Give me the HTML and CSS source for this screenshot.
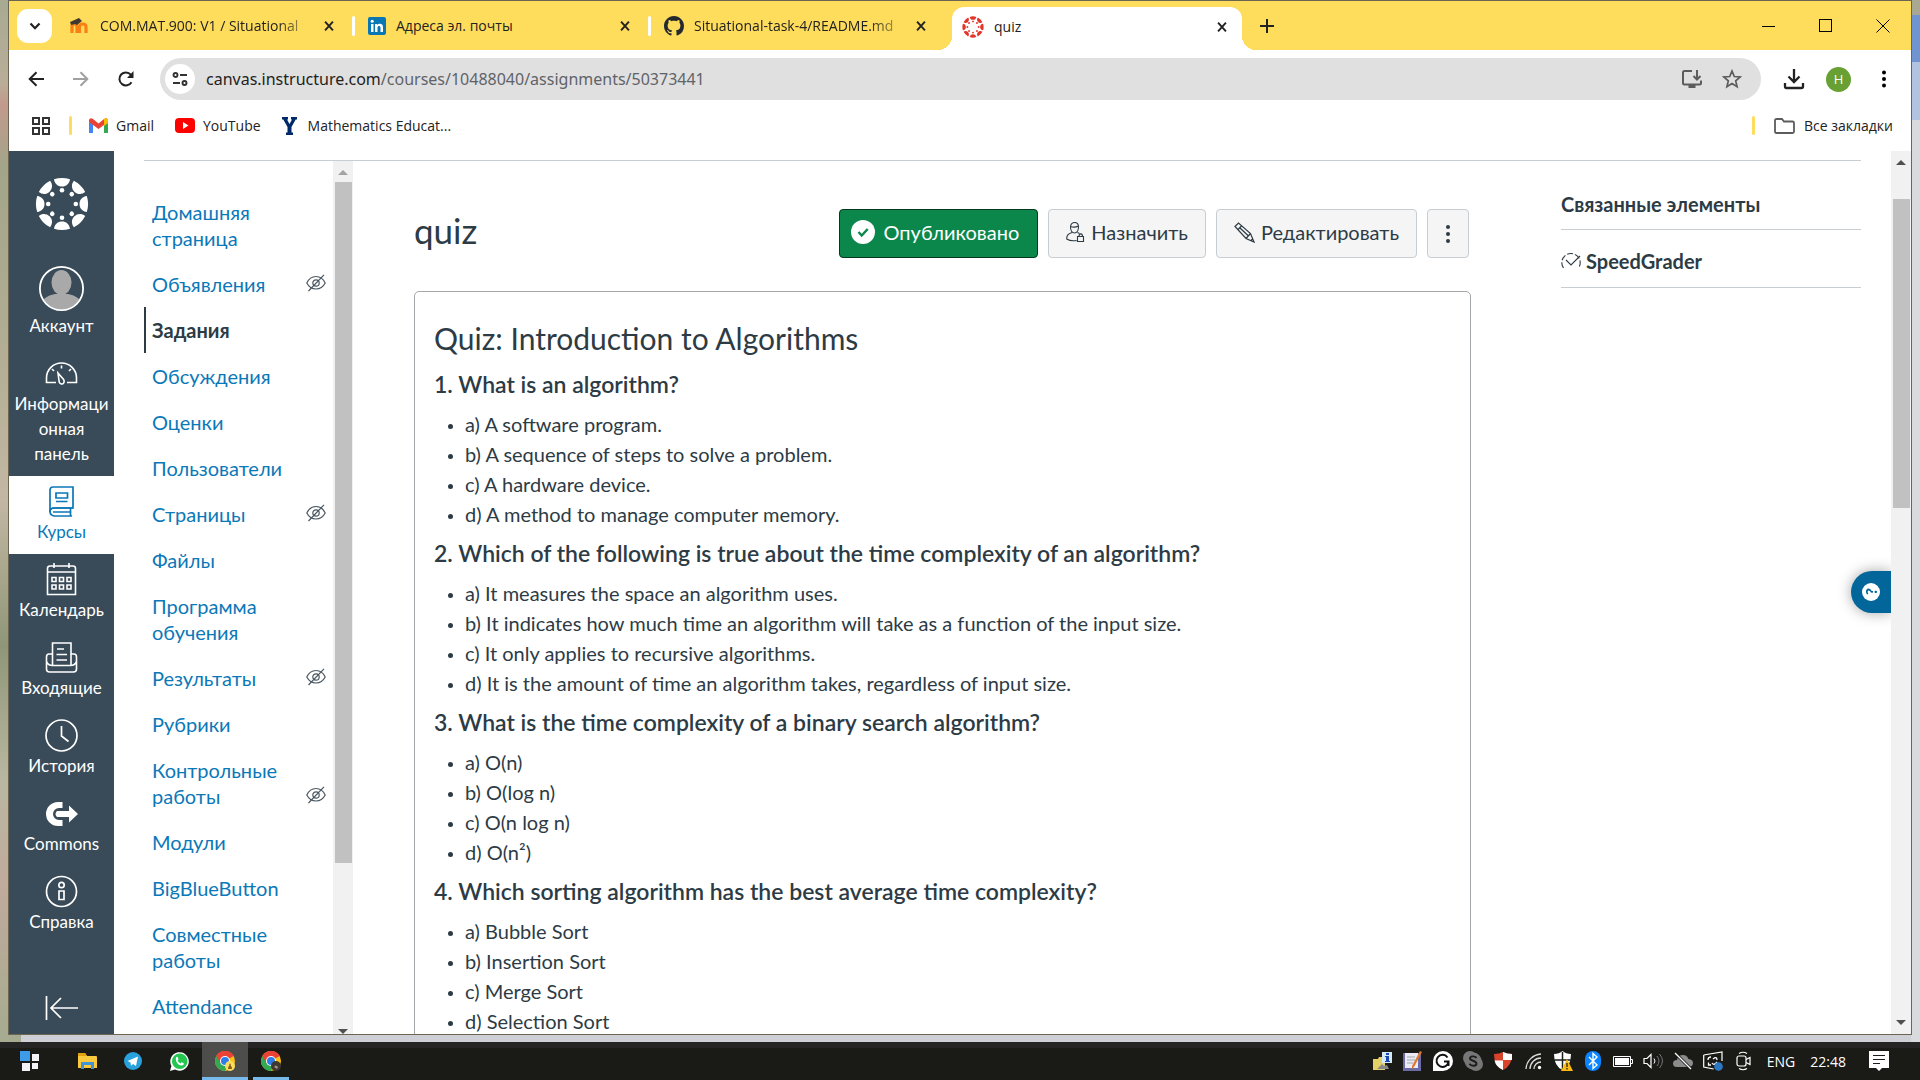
FILE: index.html
```html
<!DOCTYPE html>
<html lang="ru">
<head>
<meta charset="utf-8">
<title>quiz</title>
<link rel="stylesheet" href="styles.css">
</head>
<body>
<svg class="defs" aria-hidden="true">
  <symbol id="x" viewBox="0 0 16 16"><path d="M3.500 3l9 10M12.500 3l-9 10" fill="none" stroke="#222" stroke-width="2.200"/></symbol>
  <symbol id="canvas" viewBox="0 0 54 54">
    <g id="ray"><path d="M19 2.200a26 26 0 0 1 16 0c-.6 4.600-3.800 7.300-8 7.300s-7.400-2.700-8-7.300z"/><circle cx="27" cy="13.200" r="2.300"/></g>
    <use href="#ray" transform="rotate(45 27 27)"/><use href="#ray" transform="rotate(90 27 27)"/><use href="#ray" transform="rotate(135 27 27)"/><use href="#ray" transform="rotate(180 27 27)"/><use href="#ray" transform="rotate(225 27 27)"/><use href="#ray" transform="rotate(270 27 27)"/><use href="#ray" transform="rotate(315 27 27)"/>
  </symbol>
  <symbol id="eye" viewBox="0 0 20 18"><g fill="none" stroke="#4a5862" stroke-width="1.200"><path d="M.8 9C3 4.300 6.500 2.500 10 2.500S17 4.300 19.200 9C17 13.200 13.500 15 10 15S3 13.200.8 9z"/><circle cx="10" cy="9" r="3.200"/><path d="M2.500 17L18 .8"/></g></symbol>
  <symbol id="chrome" viewBox="0 0 20 20"><circle cx="10" cy="10" r="10" fill="#fbc116"/><path d="M10 10L1.340 5A10 10 0 0 1 18.660 5z" fill="#ea4335"/><path d="M10 10L1.340 5A10 10 0 0 0 10 20L14 12z" fill="#34a853"/><path d="M10 5h8.660A10 10 0 0 0 1.340 5l4.330 7.500z" fill="#ea4335"/><circle cx="10" cy="10" r="5" fill="#fff"/><circle cx="10" cy="10" r="4" fill="#2b7de9"/></symbol>
</svg>

<div class="desktop">
<div class="window">
  <header class="tabstrip">
    <button class="tab-search" aria-label="Поиск вкладок"><svg width="12" height="12" viewBox="0 0 12 12"><path d="M1.500 3.500L6 8.200l4.500-4.700" fill="none" stroke="#222" stroke-width="2.200"/></svg></button>
    <div class="tab">
      <svg width="21" height="20" viewBox="0 0 21 20"><path d="M3 17V9M3 17V11c0-4 5-4 5 0v6M10.500 17V11c0-4 6.500-4 6.500 0v6M10 11v6" fill="none" stroke="#f98012" stroke-width="3.200"/><path d="M1 6l9-4 3 3-5 4-2-1-4 1z" fill="#42382f"/></svg>
      <span class="tab-title faded">COM.MAT.900: V1 / Situational</span><button class="tab-close" aria-label="Закрыть"><svg width="14" height="14"><use href="#x"/></svg></button>
    </div>
    <div class="tab ruled">
      <svg width="18" height="18" viewBox="0 0 18 18"><rect width="18" height="18" rx="2" fill="#0a77b5"/><path d="M3 7h2.500v8H3zM7 7h2.300v1.200C10.600 6 15 6.200 15 10v5h-2.500v-4.500c0-2.200-3-2-3 0V15H7z" fill="#fff"/><circle cx="4.200" cy="4.300" r="1.500" fill="#fff"/></svg>
      <span class="tab-title">Адреса эл. почты</span><button class="tab-close" aria-label="Закрыть"><svg width="14" height="14"><use href="#x"/></svg></button>
    </div>
    <div class="tab ruled">
      <svg width="20" height="20" viewBox="0 0 16 16"><path fill="#24292f" d="M8 0C3.580 0 0 3.580 0 8c0 3.540 2.290 6.530 5.470 7.590.4.070.55-.17.55-.38 0-.19-.01-.82-.01-1.490-2.010.37-2.530-.49-2.690-.94-.09-.23-.48-.94-.82-1.130-.28-.15-.68-.52-.01-.53.63-.01 1.080.58 1.230.82.72 1.210 1.870.87 2.330.66.070-.52.28-.87.51-1.070-1.780-.2-3.640-.89-3.640-3.950 0-.87.31-1.590.82-2.150-.08-.2-.36-1.020.08-2.120 0 0 .67-.21 2.200.82.640-.18 1.320-.27 2-.27s1.360.09 2 .27c1.530-1.040 2.200-.82 2.200-.82.440 1.100.160 1.920.080 2.120.510.560.820 1.270.820 2.150 0 3.070-1.870 3.750-3.650 3.950.290.250.540.730.540 1.480 0 1.070-.010 1.930-.010 2.200 0 .210.150.460.550.380A8 8 0 0 0 16 8c0-4.420-3.580-8-8-8z"/></svg>
      <span class="tab-title faded">Situational-task-4/README.md</span><button class="tab-close" aria-label="Закрыть"><svg width="14" height="14"><use href="#x"/></svg></button>
    </div>
    <div class="tab active">
      <svg width="22" height="22" fill="#e4352b"><use href="#canvas"/></svg>
      <span class="tab-title">quiz</span><button class="tab-close" aria-label="Закрыть"><svg width="14" height="14"><use href="#x"/></svg></button>
    </div>
    <button class="new-tab" aria-label="Новая вкладка"><svg width="14" height="14"><path d="M7 0v14M0 7h14" stroke="#222" stroke-width="2"/></svg></button>
    <div class="win-controls">
      <button aria-label="Свернуть"><svg width="14" height="14"><path d="M0 7.500h13" stroke="#000"/></svg></button>
      <button aria-label="Развернуть"><svg width="14" height="14"><rect x=".5" y=".5" width="12" height="12" fill="none" stroke="#000"/></svg></button>
      <button aria-label="Закрыть окно"><svg width="14" height="14"><path d="M.5.5l13 13M13.500.5l-13 13" stroke="#000"/></svg></button>
    </div>
  </header>

  <div class="toolbar">
    <button aria-label="Назад"><svg width="16" height="16"><path d="M16 8H2M8.500 1.200L1.700 8l6.800 6.800" fill="none" stroke="#222" stroke-width="2"/></svg></button>
    <button aria-label="Вперёд"><svg width="16" height="16"><path d="M0 8h14M7.500 1.200L14.300 8l-6.800 6.800" fill="none" stroke="#a0a0a0" stroke-width="2"/></svg></button>
    <button aria-label="Обновить"><svg width="16" height="16"><path d="M13.500 11.200A6.500 6.500 0 1 1 12.800 3.600L14.500 5.500" fill="none" stroke="#222" stroke-width="2"/><path d="M15.500 0v7H9z" fill="#222"/></svg></button>
    <div class="omnibox">
      <button class="site-info" aria-label="Сведения о сайте"><svg width="16" height="16" viewBox="0 0 16 16"><g fill="none" stroke="#333" stroke-width="1.900"><circle cx="3.500" cy="4" r="2"/><path d="M8 4h7M1 12h7"/><circle cx="12.500" cy="12" r="2"/></g></svg></button>
      <p class="url">canvas.instructure.com<span>/courses/10488040/assignments/50373441</span></p>
      <button aria-label="Установить"><svg width="22" height="20" viewBox="0 0 22 20"><path d="M11 2H3.500Q2 2 2 3.500V14q0 1.500 1.500 1.500h15Q20 15.500 20 14v-2.500M16 1v9M12.500 7l3.500 3.500L19.500 7" fill="none" stroke="#5c5c5c" stroke-width="2"/><path d="M7.500 15h7v4h-7z" fill="#5c5c5c"/></svg></button>
      <button aria-label="В закладки"><svg width="20" height="20" viewBox="0 0 20 20"><path d="M10 2l2.300 5.500 5.900.5-4.500 3.900 1.400 5.800L10 14.600l-5.100 3.100 1.400-5.800L1.800 8l5.900-.5z" fill="none" stroke="#5c5c5c" stroke-width="1.700"/></svg></button>
    </div>
    <button aria-label="Загрузки"><svg width="22" height="22" viewBox="0 0 22 22"><path d="M11 1v12M5.500 8.500L11 14l5.500-5.500M2 15v3.500Q2 20 3.500 20h15q1.500 0 1.500-1.500V15" fill="none" stroke="#222" stroke-width="2.300"/></svg></button>
    <button class="profile" aria-label="Профиль">H</button>
    <button aria-label="Меню"><svg width="6" height="18"><circle cx="3" cy="2.500" r="2"/><circle cx="3" cy="9" r="2"/><circle cx="3" cy="15.500" r="2"/></svg></button>
  </div>

  <nav class="bookmarks" aria-label="Закладки">
    <button aria-label="Приложения"><svg width="18" height="18"><g fill="none" stroke="#333" stroke-width="2"><path d="M1 1h6v6H1zM11 1h6v6h-6zM1 11h6v6H1zM11 11h6v6h-6z"/></g></svg></button>
    <i class="bar"></i>
    <a href="#"><svg width="19" height="15" viewBox="0 0 19 15"><path d="M0 2v13h4V5z" fill="#4285f4"/><path d="M19 2v13h-4V5z" fill="#34a853"/><path d="M0 2q1-3 4-1l5.500 4.500L15 1q3-2 4 1v2l-9.500 7L0 4z" fill="#ea4335"/><path d="M15 1q3-2 4 1v3l-4 3z" fill="#fbbc04"/></svg>Gmail</a>
    <a href="#"><svg width="20" height="15" viewBox="0 0 20 15"><rect width="20" height="15" rx="4" fill="#f00"/><path d="M8 4v7l5.500-3.500z" fill="#fff"/></svg>YouTube</a>
    <a href="#" class="yale"><svg width="15" height="18" viewBox="0 0 15 18"><path d="M0 0h6v2.500H5L7.500 7 10 2.500H9V0h6v2.500h-1.300L9.500 10v5.500H11V18H4v-2.500h1.500V10L1.300 2.500H0z" fill="#00296b"/></svg>Mathematics Educat...</a>
    <i class="bar end"></i>
    <a href="#" class="all"><svg width="21" height="16" viewBox="0 0 21 16"><path d="M1 2.500Q1 1 2.500 1H8l2 2.500h8.500q1.500 0 1.500 1.500v8.500q0 1.500-1.500 1.500h-16Q1 15 1 13.500z" fill="none" stroke="#5c5c5c" stroke-width="1.800"/></svg>Все закладки</a>
  </nav>

  <div class="page">
    <nav class="global-nav" aria-label="Глобальная навигация">
      <a href="#" class="logo" aria-label="Canvas"><svg width="54" height="54" fill="#fff"><use href="#canvas"/></svg></a>
      <a href="#" class="account"><svg width="45" height="45" viewBox="0 0 45 45"><defs><clipPath id="av"><circle cx="22.500" cy="22.500" r="21"/></clipPath></defs><g clip-path="url(#av)" fill="#a9a9a9"><ellipse cx="22.500" cy="16.500" rx="10" ry="12.500"/><path d="M0 45c1-10 6-15 16-17h13c10 2 15 7 16 17z"/></g><circle cx="22.500" cy="22.500" r="21.600" fill="none" stroke="#fff" stroke-width="1.800"/></svg>Аккаунт</a>
      <a href="#"><svg width="33" height="33" viewBox="0 0 33 33"><g fill="none" stroke="#fff" stroke-width="1.600"><path d="M11 25.500H1.500V21a15 15 0 0 1 30 0v4.500H22"/><path d="M13 16l5.600 6.500c2.200 4-2.800 6.500-4.400 2.500z"/><path d="M16.500 8.500v3M7 12l2 2M26 12l-2 2"/></g></svg>Информаци<br>онная<br>панель</a>
      <a href="#" class="current"><svg width="33" height="33" viewBox="0 0 33 33"><g fill="none" stroke="#0b78b8" stroke-width="1.700"><path d="M8 2h20v21H9q-4 0-4 4V5q0-3 3-3z"/><path d="M28 23H9q-4 0-4 3.500T9 31h18M25.500 23v8M8 27h17"/><path d="M11 8h11.500v5H11zM11 16.500h11.500"/></g></svg>Курсы</a>
      <a href="#"><svg width="33" height="33" viewBox="0 0 33 33"><g fill="none" stroke="#fff" stroke-width="1.600"><path d="M5 3h23q2.500 0 2.500 2.500V31.500h-28V5.500Q2.500 3 5 3zM2.500 9h28M9 0v5M24 0v5"/><path d="M7 14.500h4v4H7zM14.500 14.500h4v4h-4zM22 14.500h4v4h-4zM7 22h4v4H7zM14.500 22h4v4h-4zM22 22h4v4h-4z"/></g></svg>Календарь</a>
      <a href="#"><svg width="33" height="33" viewBox="0 0 33 33"><g fill="none" stroke="#fff" stroke-width="1.600"><path d="M7.500 24V2h18.500v22"/><path d="M7.500 13H4q-2.500 0-2.500 3v12q0 3 3 3h24q3 0 3-3V16q0-3-2.500-3h-3M1.500 20.500q1.500 4 6 4h18q4.500 0 6-4M12 8h7M11.500 13.500H22M11.500 19H22"/></g></svg>Входящие</a>
      <a href="#"><svg width="33" height="33" viewBox="0 0 33 33"><g fill="none" stroke="#fff" stroke-width="1.700"><circle cx="16.500" cy="16.500" r="15.500"/><path d="M16.500 7v10l7 5.500"/></g></svg>История</a>
      <a href="#"><svg width="33" height="33" viewBox="0 0 33 33"><path d="M17.500 5H13a12 12 0 0 0 0 24h4.500v-6H14a6 6 0 0 1 0-12h3.500z" fill="#fff"/><path d="M12 14h12V8.500l9 8.500-9 8.500V20H12q-3-3 0-6z" fill="#fff"/></svg>Commons</a>
      <a href="#"><svg width="33" height="33" viewBox="0 0 33 33"><g fill="none" stroke="#fff" stroke-width="1.700"><circle cx="16.500" cy="16.500" r="15"/><circle cx="16.500" cy="10" r="2.700"/><path d="M14 16h5v8.500h-5z"/></g></svg>Справка</a>
      <button class="collapse" aria-label="Свернуть навигацию"><svg width="33" height="24"><path d="M1.500 0v24M33 12H6M16 2L6 12l10 10" fill="none" stroke="#fff" stroke-width="1.700"/></svg></button>
    </nav>

    <div class="content">
      <nav class="course-nav" aria-label="Курс">
        <ul>
          <li><a href="#">Домашняя страница</a></li>
          <li><a href="#">Объявления</a><svg width="20" height="18"><use href="#eye"/></svg></li>
          <li class="on"><a href="#">Задания</a></li>
          <li><a href="#">Обсуждения</a></li>
          <li><a href="#">Оценки</a></li>
          <li><a href="#">Пользователи</a></li>
          <li><a href="#">Страницы</a><svg width="20" height="18"><use href="#eye"/></svg></li>
          <li><a href="#">Файлы</a></li>
          <li><a href="#">Программа обучения</a></li>
          <li><a href="#">Результаты</a><svg width="20" height="18"><use href="#eye"/></svg></li>
          <li><a href="#">Рубрики</a></li>
          <li><a href="#">Контрольные работы</a><svg width="20" height="18"><use href="#eye"/></svg></li>
          <li><a href="#">Модули</a></li>
          <li><a href="#">BigBlueButton</a></li>
          <li><a href="#">Совместные работы</a></li>
          <li><a href="#">Attendance</a></li>
        </ul>
        <div class="scroll inner"><i class="arrow up dim"></i><i class="thumb"></i><i class="arrow down"></i></div>
      </nav>

      <main>
        <div class="title-row">
          <h1>quiz</h1>
          <button class="btn published"><svg width="24" height="24"><circle cx="12" cy="12" r="12" fill="#fff"/><path d="M7.500 12l3.200 3.500 6-6.500" fill="none" stroke="#0b874b" stroke-width="2.400"/></svg>Опубликовано</button>
          <button class="btn assign"><svg width="19" height="20" viewBox="0 0 19 20"><g fill="none" stroke="#2d3b45" stroke-width="1.100"><path d="M4.500 5c0-6 8-6 8 0 0 3-1.500 6-4 6s-4-3-4-6zM4.500 4.500q4 1.500 8-.5M6 10.500C2 12 .7 13 .7 17q4 2.500 10 1.500M11.500 10.500l2 1"/><path d="M11.500 14.500h6v5h-6zM13 14.500c0-3.500 3.500-3.500 3.500 0"/></g></svg>Назначить</button>
          <button class="btn edit"><svg width="21" height="21" viewBox="0 0 21 21"><g fill="none" stroke="#2d3b45" stroke-width="1.200"><path d="M1 4.500L4.500 1l12 10.500L20 20l-8-3.500zM4 7.500L7.500 4M12 16.500l4.500-5M6 6l8.500 8M16.500 19l2.500-2.500"/></g></svg>Редактировать</button>
          <button class="btn more" aria-label="Ещё"><svg width="4" height="20" fill="#2d3b45"><circle cx="2" cy="3" r="2"/><circle cx="2" cy="10" r="2"/><circle cx="2" cy="17" r="2"/></svg></button>
        </div>
        <article>
          <h2>Quiz: Introduction to Algorithms</h2>
          <h3>1. What is an algorithm?</h3>
          <ul><li>a) A software program.</li><li>b) A sequence of steps to solve a problem.</li><li>c) A hardware device.</li><li>d) A method to manage computer memory.</li></ul>
          <h3>2. Which of the following is true about the time complexity of an algorithm?</h3>
          <ul><li>a) It measures the space an algorithm uses.</li><li>b) It indicates how much time an algorithm will take as a function of the input size.</li><li>c) It only applies to recursive algorithms.</li><li>d) It is the amount of time an algorithm takes, regardless of input size.</li></ul>
          <h3>3. What is the time complexity of a binary search algorithm?</h3>
          <ul><li>a) O(n)</li><li>b) O(log n)</li><li>c) O(n log n)</li><li>d) O(n²)</li></ul>
          <h3>4. Which sorting algorithm has the best average time complexity?</h3>
          <ul><li>a) Bubble Sort</li><li>b) Insertion Sort</li><li>c) Merge Sort</li><li>d) Selection Sort</li></ul>
        </article>
      </main>

      <aside>
        <h2>Связанные элементы</h2>
        <a href="#"><svg width="20" height="17" viewBox="0 0 20 17"><g fill="none" stroke="#2d3b45" stroke-width="1.100"><path d="M2.500 16A9.200 9.200 0 1 1 17.500 16" stroke-dasharray="6 2"/><path d="M5 8l5 5 9-9"/></g></svg>SpeedGrader</a>
      </aside>
    </div>
    <button class="help-tab" aria-label="Помощь"><span>?</span></button>
    <div class="scroll outer"><i class="arrow up"></i><i class="thumb"></i><i class="arrow down"></i></div>
  </div>
</div>
</div>

<footer class="taskbar">
  <button class="start" aria-label="Пуск"><svg width="20" height="20"><path d="M0 0h10v10H0z" fill="#3f9be8"/><path d="M12 3h7v7h-7zM2 12h8v8H2zM12 12h6v6h-6z" fill="#f2f2f7"/></svg></button>
  <button aria-label="Проводник"><svg width="19" height="17"><path d="M0 1q0-1 1-1h6l2 3h9q1 0 1 1v11H0z" fill="#fbc93e"/><path d="M0 1q0-1 1-1h6l2 3H0z" fill="#e2a10e"/><path d="M3 16V9h13v7h-3v-4H6v4z" fill="#3f94d8"/></svg></button>
  <button aria-label="Telegram"><svg width="18" height="18"><circle cx="9" cy="9" r="9" fill="#29a1dc"/><path d="M3.500 9L14 4.500l-2 9.500-3-2-2 1.800-.5-3.300z" fill="#fff"/></svg></button>
  <button aria-label="WhatsApp"><svg width="19" height="19"><path d="M0 19l1.400-5A9.300 9.300 0 1 1 5 17.600z" fill="#fff"/><circle cx="9.700" cy="9.300" r="7.800" fill="#25c650"/><path d="M6 5.500q1.500-1.500 2 .5l.5 1.500-1 1q1 2 3 3l1-1.200 2.300 1q.2 2.200-2.300 2.200C8 13.500 5 9 6 5.500z" fill="#fff"/></svg></button>
  <button class="task focus" aria-label="Chrome"><svg width="21" height="21" viewBox="0 0 21 21"><use href="#chrome" width="20" height="20"/><circle cx="15" cy="15" r="5" fill="#ffdd5c"/><path d="M13 18q0-3 1.300-3.300v-2h1.400v2Q17 15 17 18z" fill="#80601c"/></svg></button>
  <button class="task" aria-label="Chrome"><svg width="21" height="21" viewBox="0 0 21 21"><use href="#chrome" width="20" height="20"/><circle cx="15" cy="15" r="5" fill="#3d3833"/><path d="M13 16q2-3 4 0l-1 2z" fill="#a3917b"/></svg></button>
  <div class="tray">
    <svg width="20" height="20"><path d="M0 8h5l1-2h6v13H0z" fill="#e6d169"/><path d="M9 1h10v11H9z" fill="#d6e8fb"/><path d="M13 2h3v2h-3zM12 5h4v5h1v1h-5v-1h1V6h-1z" fill="#1748b0"/><path d="M4 18l5-5 2 2 3-1 2 4z" fill="#888"/></svg>
    <svg width="20" height="20"><path d="M0 2h18v18H0z" fill="#6b6ba8"/><path d="M2 2h13v15H2z" fill="#eceaf6"/><path d="M4 6h8M4 9h8M4 12h6" stroke="#9aa"/><path d="M17 0l2 1-8 15-2 2v-3z" fill="#e07a2b"/></svg>
    <svg width="20" height="20"><path d="M0 20V10a10 10 0 1 1 10 10z" fill="#fff"/><path d="M14.500 6.500A6 6 0 1 0 15.500 10.500H11M15.500 10v5" fill="none" stroke="#111" stroke-width="2"/></svg>
    <svg width="20" height="20"><circle cx="7" cy="7" r="7" fill="#777"/><circle cx="13" cy="13" r="7" fill="#777"/><circle cx="10" cy="10" r="8.500" fill="#777"/><path d="M13.500 7C12 4.500 7 5 7 7.500s6.500 2 6.500 5-5.500 3-7 .3" fill="none" stroke="#1c1c1c" stroke-width="1.900"/></svg>
    <svg width="20" height="20"><path d="M1 3q5 0 9-2 4 2 9 2 0 12-9 16Q1 15 1 3z" fill="#d8432c"/><path d="M10 1q4 2 9 2v6h-9zM1.500 9.500H10V19Q3 16 1.500 9.500z" fill="#fff"/></svg>
    <svg width="20" height="20"><g fill="none" stroke="#ddd" stroke-width="1.300"><path d="M3 18A16 16 0 0 1 18 3M7 18A11 11 0 0 1 18 7M11 18a7 7 0 0 1 7-7"/></g><circle cx="16.500" cy="16.500" r="1.700" fill="#fff"/></svg>
    <svg width="20" height="20"><path d="M1 3q5 0 8.500-3Q13 3 18 3q0 12-8.500 16Q1 15 1 3z" fill="#fff"/><path d="M9.500 1v18M1 9h17" stroke="#1c1c1c" stroke-width="1.500"/><path d="M14 8l6 12H8z" fill="#fdb913"/><path d="M14 12v4M14 17v1.500" stroke="#222" stroke-width="1.300"/></svg>
    <svg width="20" height="20"><rect x="2" width="16" height="20" rx="8" fill="#0a84ff"/><path d="M6 6l8 8-4 3.500v-15L14 6l-8 8" fill="none" stroke="#fff" stroke-width="1.400"/></svg>
    <svg width="20" height="20"><path d="M.5 5.500h17v10H.5zM18 8.500h1.500v4H18" fill="none" stroke="#fff"/><path d="M2 7h14v7H2z" fill="#fff"/></svg>
    <svg width="20" height="20"><path d="M1 7.500h3l4-4v13l-4-4H1z" fill="none" stroke="#fff" stroke-width="1.200"/><path d="M11 7.500q2 2.500 0 5" fill="none" stroke="#fff"/><path d="M14 5q4 5 0 10M16.500 3q6 7 0 14" fill="none" stroke="#777"/></svg>
    <svg width="20" height="20"><path d="M4 16q-4 0-4-3.500T4 9q1-5 6-5 4 0 5.500 4Q20 8.500 20 12t-4 4z" fill="#8c8c8c"/><path d="M2 2l16 16" stroke="#1c1c1c" stroke-width="3"/><path d="M2 2l16 16" stroke="#fff" stroke-width="1.200"/></svg>
    <svg width="20" height="20"><path d="M.7 4L19 1v9M.7 4v12l10 2" fill="none" stroke="#fff" stroke-width="1.200"/><path d="M5 9q0-3 3-3M8 14H5.500v-2.500M10 8q4-3 4 1M14 11q-3 4-5 1" fill="none" stroke="#fff" stroke-width="1.300"/><circle cx="15.500" cy="15.500" r="4.300" fill="#2b78c5"/></svg>
    <svg width="20" height="20"><g fill="none" stroke="#fff" stroke-width="1.200"><rect x="4" y="5" width="9" height="10" rx="2"/><path d="M13 8.500l4-2v7l-4-2M6 2.500q4-2.500 8 0M6 17.500q4 2.500 8 0"/></g></svg>
    <span class="lang">ENG</span>
    <time>22:48</time>
    <svg width="20" height="20"><path d="M0 0h20v17h-7l-3 3-3-3H0z" fill="#fff"/><path d="M4 4.500h12M4 8.500h12M4 12.500h7" stroke="#1c1c1c" stroke-width="1.200"/></svg>
  </div>
</footer>
</body>
</html>
```
FILE: styles.css
```css
* { box-sizing: border-box; margin: 0; padding: 0; }
ul { list-style: none; }
button { border: 0; background: none; font: inherit; color: inherit; display: flex; align-items: center; justify-content: center; }
a { color: inherit; text-decoration: none; }
svg { flex: none; }
.defs { position: absolute; width: 0; height: 0; }

body {
  height: 100vh;
  display: flex;
  flex-direction: column;
  overflow: hidden;
  font-family: "Open Sans", "Noto Sans", sans-serif;
  font-size: 14px;
  color: #222;
}

/* Desktop behind the browser window */
.desktop {
  flex: 1;
  min-height: 0;
  padding: 0 8px 7px;
  background:
    linear-gradient(#a9a893 0 15px, #7094cf 15px 62px, #b2c3e0 62px 120px, #d9dade 120px) right / 9px 100% no-repeat,
    linear-gradient(#cfd0d5, #cfd0d5) 21px 100% / 100% 8px no-repeat,
    linear-gradient(#a8aa92, #b9ad98 8%, #c29a8c 10%, #a2a58a 16%, #aeab90 30%, #c2b7a3 48%, #8f9678 62%, #b9b7a2 75%, #c0aa9c 85%, #a5ab90);
}
.window {
  height: 100%;
  display: flex;
  flex-direction: column;
  border: 1px solid #6b6552;
  background: #fff;
}

/* Tabs */
.tabstrip { height: 49px; display: flex; align-items: center; padding-left: 8px; background: #ffdd5c; flex: none; }
.tab-search { width: 35px; height: 34px; border-radius: 11px; background: #fff; margin-right: 7px; }
.tab { position: relative; display: flex; align-items: center; gap: 10px; width: 296px; height: 100%; padding: 0 14px 0 10px; }
.tab-title { flex: 1; white-space: nowrap; }
.tab .tab-close { width: 24px; height: 24px; }
.faded { mask-image: linear-gradient(90deg, #000 85%, rgba(0, 0, 0, .3)); }
.ruled::before { content: ""; position: absolute; left: -3px; top: 15px; width: 3px; height: 20px; border-radius: 2px; background: #fff; }
.tab.ruled { padding-left: 13px; }
.tab.active { width: 290px; height: 43px; margin-left: 5px; align-self: flex-end; padding: 0 8px 4px 10px; background: #fff; border-radius: 12px 12px 0 0; }
.tab.active::before, .tab.active::after { content: ""; position: absolute; bottom: 0; width: 14px; height: 14px; }
.tab.active::before { left: -14px; background: radial-gradient(circle at 0 0, #ffdd5c 14px, #fff 14px); }
.tab.active::after { right: -14px; background: radial-gradient(circle at 100% 0, #ffdd5c 14px, #fff 14px); }
.new-tab { width: 50px; height: 34px; }
.win-controls { display: flex; margin-left: auto; height: 100%; }
.win-controls button { width: 57px; }

/* Address row */
.toolbar { height: 58px; display: flex; align-items: center; padding: 0 5px 0 4px; background: #fff; flex: none; }
.toolbar > button { width: 45px; height: 40px; }
.omnibox { flex: 1; display: flex; align-items: center; height: 42px; margin: 0 10px 0 12px; padding: 0 9px 0 5px; background: #e0e0e0; border-radius: 21px; }
.omnibox button { width: 40px; height: 40px; }
.omnibox .site-info { width: 30px; height: 30px; background: #fff; border-radius: 50%; }
.url { flex: 1; margin-left: 11px; font-family: "Noto Sans", sans-serif; font-size: 16px; color: #222; }
.url span { color: #5f6368; }
.toolbar .profile { width: 25px; height: 25px; margin: 0 10px; border-radius: 50%; background: #68a033; color: #fff; font-size: 13px; }

/* Bookmarks */
.bookmarks { height: 43px; display: flex; align-items: center; padding: 0 18px 8px 23px; flex: none; }
.bookmarks a { display: flex; align-items: center; gap: 8px; margin-right: 21px; }
.bookmarks .yale { gap: 11px; }
.bookmarks .all { margin: 0 0 0 19px; gap: 9px; }
.bar { width: 3px; height: 19px; margin: 0 17px 0 19px; background: #ffdd5c; border-radius: 2px; }
.bar.end { margin: 0 0 0 auto; }

/* Page */
.page { position: relative; flex: 1; min-height: 0; display: flex; overflow: hidden; font-family: Lato, "Noto Sans", sans-serif; font-size: 20px; color: #2d3b45; }
.global-nav { width: 105px; flex: none; display: flex; flex-direction: column; background: #394b58; color: #fff; font-size: 17px; line-height: 25px; text-align: center; }
.global-nav a { display: flex; flex-direction: column; align-items: center; gap: 1px; padding: 9px 0 10px; }
.global-nav .logo { padding: 26px 0 35px; }
.global-nav .account { padding-top: 0; gap: 2px; }
.global-nav .current { background: #fff; color: #0b78b8; }
.collapse { margin: auto 0 14px; height: 24px; }

.content { flex: 1; min-width: 0; display: flex; margin: 9px 30px 0; border-top: 1px solid #c7cdd1; }
.course-nav { width: 209px; flex: none; display: flex; justify-content: space-between; }
.course-nav ul { width: 182px; padding-top: 28px; line-height: 26px; color: #0b78b8; }
.course-nav li { display: flex; align-items: flex-end; justify-content: space-between; padding: 10px 0 10px 6px; border-left: 2px solid transparent; }
.course-nav li a { max-width: 140px; }
.course-nav li svg { margin-bottom: 5px; }
.course-nav .on { border-color: #2d3b45; color: #2d3b45; font-weight: 700; }

.scroll { width: 20px; flex: none; display: flex; flex-direction: column; align-items: center; background: #f1f1f1; }
.thumb { width: 17px; background: #c1c1c1; }
.arrow { width: 0; height: 0; border: 5px solid transparent; }
.arrow.up { border-top: 0; border-bottom-color: #505050; }
.arrow.down { border-bottom: 0; border-top-color: #505050; margin-top: auto; }
.arrow.dim { border-bottom-color: #a3a3a3; }
.inner .arrow.up { margin: 9px 0 7px; }
.inner .thumb { height: 78%; }
.outer .arrow.up { margin: 9px 0 34px; }
.outer .thumb { height: 35%; }
.outer .arrow.down { margin-bottom: 9px; }

main { flex: 1; min-width: 0; margin: 48px 90px 0 61px; }
.title-row { display: flex; align-items: center; gap: 10px; height: 49px; margin-bottom: 33px; padding-right: 2px; }
h1 { flex: 1; font-size: 35px; font-weight: 400; line-height: 40px; padding-bottom: 8px; }
.btn { height: 49px; gap: 6px; padding: 0 17px 3px; border: 1px solid #c7cdd1; border-radius: 4px; background: #f5f5f5; white-space: nowrap; }
.published { gap: 9px; padding: 0 18px 3px 11px; border-color: #07381f; background: #0b874b; color: #fff; }
.more { width: 42px; padding: 0; }
article { padding: 26px 19px; border: 1px solid #a5a8aa; border-radius: 5px; }
article h2 { font-size: 30px; font-weight: 400; line-height: 40px; margin-bottom: 11px; }
article h3 { font-size: 23px; font-weight: 600; line-height: 30px; margin-bottom: 10px; }
article ul { list-style: disc; padding-left: 31px; margin-bottom: 9px; line-height: 30px; }
article li::marker { font-size: 15px; }

aside { width: 300px; flex: none; padding-top: 28px; font-weight: 700; }
aside h2 { font-size: 20px; line-height: 30px; padding-bottom: 10px; border-bottom: 1px solid #c7cdd1; }
aside a { display: flex; align-items: center; gap: 5px; height: 58px; padding-top: 4px; border-bottom: 1px solid #c7cdd1; }

/* Help tab floats over the page edge */
.help-tab { position: absolute; right: 20px; top: 420px; width: 40px; height: 42px; border-radius: 21px 0 0 21px; background: #02669b; box-shadow: 0 0 14px rgba(0, 0, 0, .35); }
.help-tab span { width: 18px; height: 18px; border-radius: 50%; background: #fff; color: #02669b; font-size: 15px; line-height: 18px; font-weight: 900; writing-mode: vertical-rl; transform: rotate(180deg); }
.scroll.outer { position: relative; background: #f1f1f1; }

/* Taskbar */
.taskbar { height: 38px; flex: none; display: flex; align-items: stretch; padding-left: 7px; background: linear-gradient(#242424 6px, #1a1a17 6px); color: #fff; }
.taskbar button { width: 46px; }
.taskbar .start { margin-right: 11px; }
.taskbar .task { position: relative; }
.taskbar .focus { background: #4d4d4c; }
.task::after { content: ""; position: absolute; inset: auto 5px 0; height: 3px; background: #76b9ed; }
.focus::after { inset: auto 0 0; }
.tray { display: flex; align-items: center; gap: 10px; margin-left: auto; padding-right: 31px; }
.lang { margin-left: 4px; }
.tray time { margin: 0 13px 0 5px; }
```
